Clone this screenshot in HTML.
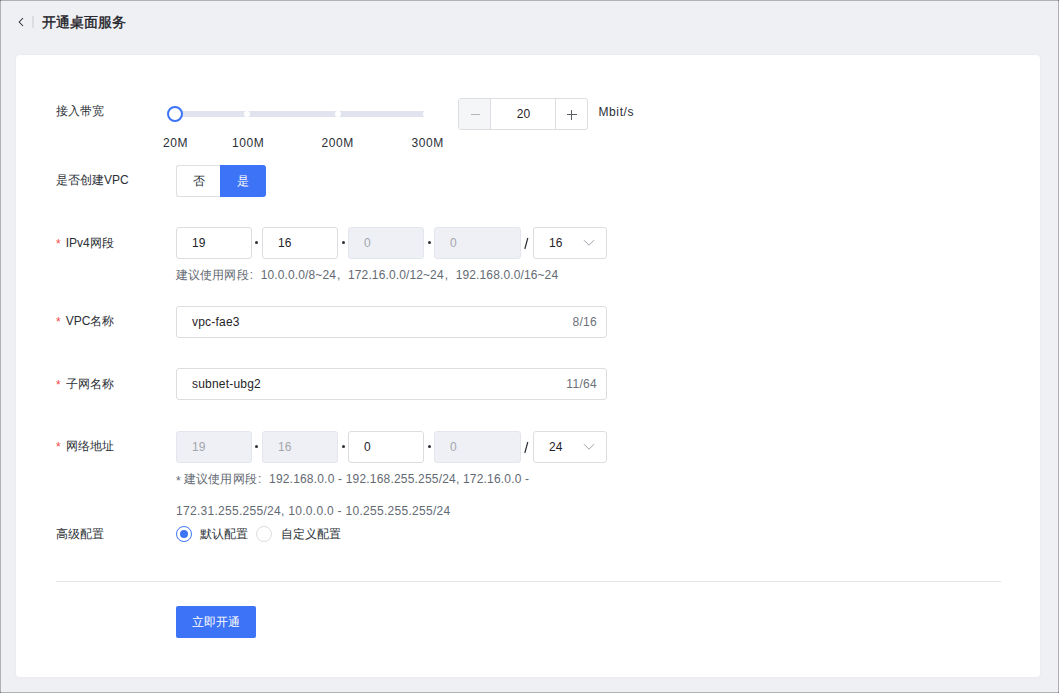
<!DOCTYPE html>
<html><head><meta charset="utf-8">
<style>
*{box-sizing:border-box;margin:0;padding:0}
html,body{width:1059px;height:693px;overflow:hidden}
body{background:#eff0f4;font-family:"Liberation Sans",sans-serif;font-size:12px;color:#2b2f36;position:relative}
.frame{position:absolute;left:0;top:0;width:1059px;height:693px;border:1px solid #b0b1b4;pointer-events:none;z-index:10}
.cn{position:absolute;width:1px;height:1px;background:#707070;z-index:11}
.abs{position:absolute;white-space:nowrap}
.card{position:absolute;left:16px;top:55px;width:1024px;height:622px;background:#fff;border-radius:4px;box-shadow:0 0 3px rgba(0,0,0,0.05)}
.lbl{position:absolute;left:56px;font-size:12px;line-height:16px;color:#2b2f36}
.req{color:#f54a45;margin-right:5px;position:relative;top:1px}
.box{position:absolute;height:32px;border:1px solid #dcdde0;border-radius:3px;background:#fff;font-size:12px;line-height:30px;padding-left:15px;color:#1f2329;letter-spacing:0.2px}
.dis{background:#eff0f5;color:#a3a6ad;border-color:#e4e6ee}
.dot{position:absolute;width:3px;height:3px;background:#2b2f36;border-radius:50%}
.hint{position:absolute;left:176px;font-size:12px;line-height:16px;color:#646a73;letter-spacing:0.25px}
.cnt{position:absolute;right:9px;top:0;color:#6b7079;letter-spacing:0.3px}
</style></head><body>
<div class="frame"></div><div class="cn" style="left:0;top:0"></div><div class="cn" style="right:0;top:0"></div><div class="cn" style="left:0;bottom:0"></div><div class="cn" style="right:0;bottom:0"></div>
<!-- header -->
<svg class="abs" style="left:17px;top:16px" width="8" height="12" viewBox="0 0 8 12"><path d="M6 2 L2.2 6 L6 10" fill="none" stroke="#2b2f36" stroke-width="1.05"/></svg>
<div class="abs" style="left:32px;top:16px;width:2px;height:12px;background:#dcdde1"></div>
<div class="abs" style="left:42px;top:13px;font-size:14px;line-height:18px;color:#1f2329;-webkit-text-stroke:0.4px #1f2329">开通桌面服务</div>

<div class="card"></div>

<!-- bandwidth -->
<div class="lbl" style="top:103px">接入带宽</div>
<div class="abs" style="left:175px;top:111px;width:252px;height:6px;background:#e1e3ee;border-radius:3px"></div>
<div class="abs" style="left:244px;top:111px;width:6px;height:6px;background:#fff;border-radius:50%"></div>
<div class="abs" style="left:335px;top:111px;width:6px;height:6px;background:#fff;border-radius:50%"></div>
<div class="abs" style="left:423px;top:111px;width:6px;height:6px;background:#fff;border-radius:50%"></div>
<div class="abs" style="left:167px;top:106px;width:16px;height:16px;border:2px solid #3d73f6;border-radius:50%;background:#fff"></div>
<div class="abs" style="left:163px;top:135px;line-height:16px;color:#2b2f36;letter-spacing:0.6px">20M</div>
<div class="abs" style="left:232px;top:135px;line-height:16px;color:#2b2f36;letter-spacing:0.6px">100M</div>
<div class="abs" style="left:321.5px;top:135px;line-height:16px;color:#2b2f36;letter-spacing:0.6px">200M</div>
<div class="abs" style="left:411.5px;top:135px;line-height:16px;color:#2b2f36;letter-spacing:0.6px">300M</div>

<div class="abs" style="left:458px;top:98px;width:130px;height:32px;border:1px solid #dcdde0;border-radius:3px;background:#fff;overflow:hidden">
  <div class="abs" style="left:0;top:0;width:32px;height:30px;background:#f5f6f8;border-right:1px solid #dcdde0"></div>
  <div class="abs" style="left:11.5px;top:15px;width:9.5px;height:1.2px;background:#b3b5ba"></div>
  <div class="abs" style="left:32px;top:0;width:65px;height:30px;line-height:30px;text-align:center;color:#1f2329">20</div>
  <div class="abs" style="left:96px;top:0;width:1px;height:30px;background:#dcdde0"></div>
  <div class="abs" style="left:107.5px;top:15px;width:10px;height:1px;background:#5a5d63"></div>
  <div class="abs" style="left:112px;top:10.5px;width:1px;height:10px;background:#5a5d63"></div>
</div>
<div class="abs" style="left:598.5px;top:103.5px;line-height:16px;color:#2b2f36;letter-spacing:0.6px">Mbit/s</div>

<!-- create vpc -->
<div class="lbl" style="top:172px">是否创建VPC</div>
<div class="abs" style="left:176px;top:165px;width:45px;height:32px;border:1px solid #dedfe3;border-right:none;border-radius:3px 0 0 3px;text-align:center;line-height:30px;color:#2b2f36">否</div>
<div class="abs" style="left:220px;top:165px;width:46px;height:32px;background:#3d73f6;border-radius:0 3px 3px 0;text-align:center;line-height:32px;color:#fff">是</div>

<!-- ipv4 -->
<div class="lbl" style="top:235px"><span class="req">*</span>IPv4网段</div>
<div class="box" style="left:176px;top:227px;width:76px">19</div>
<div class="dot" style="left:255px;top:241px"></div>
<div class="box" style="left:262px;top:227px;width:76px">16</div>
<div class="dot" style="left:341.5px;top:241px"></div>
<div class="box dis" style="left:348px;top:227px;width:76px">0</div>
<div class="dot" style="left:427.5px;top:241px"></div>
<div class="box dis" style="left:434px;top:227px;width:87px">0</div>
<svg class="abs" style="left:522px;top:236px" width="8" height="14" viewBox="0 0 8 14"><path d="M5.8 2 L2.8 13" stroke="#2b2f36" stroke-width="1.2" fill="none"/></svg>
<div class="box" style="left:533px;top:227px;width:74px">16</div>
<svg class="abs" style="left:583px;top:239px" width="12" height="8" viewBox="0 0 12 8"><path d="M1 1.2 L6 6.2 L11 1.2" fill="none" stroke="#9ea2a9" stroke-width="1"/></svg>
<div class="hint" style="top:267px;letter-spacing:0.12px">建议使用网段<span style="display:inline-block;width:12px;padding-left:1px">:</span>10.0.0.0/8~24<span style="display:inline-block;width:12px;padding-left:1px">,</span>172.16.0.0/12~24<span style="display:inline-block;width:12px;padding-left:1px">,</span>192.168.0.0/16~24</div>

<!-- vpc name -->
<div class="lbl" style="top:313px"><span class="req">*</span>VPC名称</div>
<div class="box" style="left:176px;top:306px;width:431px">vpc-fae3<span class="cnt">8/16</span></div>

<!-- subnet name -->
<div class="lbl" style="top:376px"><span class="req">*</span>子网名称</div>
<div class="box" style="left:176px;top:368px;width:431px">subnet-ubg2<span class="cnt">11/64</span></div>

<!-- network addr -->
<div class="lbl" style="top:438px"><span class="req">*</span>网络地址</div>
<div class="box dis" style="left:176px;top:431px;width:76px">19</div>
<div class="dot" style="left:255px;top:445px"></div>
<div class="box dis" style="left:262px;top:431px;width:76px">16</div>
<div class="dot" style="left:341.5px;top:445px"></div>
<div class="box" style="left:348px;top:431px;width:76px">0</div>
<div class="dot" style="left:427.5px;top:445px"></div>
<div class="box dis" style="left:434px;top:431px;width:87px">0</div>
<svg class="abs" style="left:522px;top:440px" width="8" height="14" viewBox="0 0 8 14"><path d="M5.8 2 L2.8 13" stroke="#2b2f36" stroke-width="1.2" fill="none"/></svg>
<div class="box" style="left:533px;top:431px;width:74px">24</div>
<svg class="abs" style="left:583px;top:443px" width="12" height="8" viewBox="0 0 12 8"><path d="M1 1.2 L6 6.2 L11 1.2" fill="none" stroke="#9ea2a9" stroke-width="1"/></svg>
<div class="hint" style="top:471px;letter-spacing:0.19px"><span style="position:relative;top:2px;margin-right:3px">*</span>建议使用网段<span style="display:inline-block;width:12px;padding-left:1px">:</span>192.168.0.0 - 192.168.255.255/24, 172.16.0.0 -</div>
<div class="hint" style="top:503px;letter-spacing:0.29px">172.31.255.255/24, 10.0.0.0 - 10.255.255.255/24</div>

<!-- advanced -->
<div class="lbl" style="top:526px">高级配置</div>
<div class="abs" style="left:175.5px;top:526px;width:16px;height:16px;border:1px solid #3d73f6;border-radius:50%"></div>
<div class="abs" style="left:179.5px;top:530px;width:8px;height:8px;background:#3d73f6;border-radius:50%"></div>
<div class="abs" style="left:200px;top:526px;line-height:16px">默认配置</div>
<div class="abs" style="left:255.5px;top:526px;width:16px;height:16px;border:1px solid #dcdde0;border-radius:50%"></div>
<div class="abs" style="left:280.5px;top:526px;line-height:16px">自定义配置</div>

<div class="abs" style="left:56px;top:581px;width:945px;height:1px;background:#e4e5e7"></div>

<div class="abs" style="left:176px;top:606px;width:80px;height:32px;background:#3d73f6;border-radius:2px;color:#fff;text-align:center;line-height:32px">立即开通</div>
</body></html>
